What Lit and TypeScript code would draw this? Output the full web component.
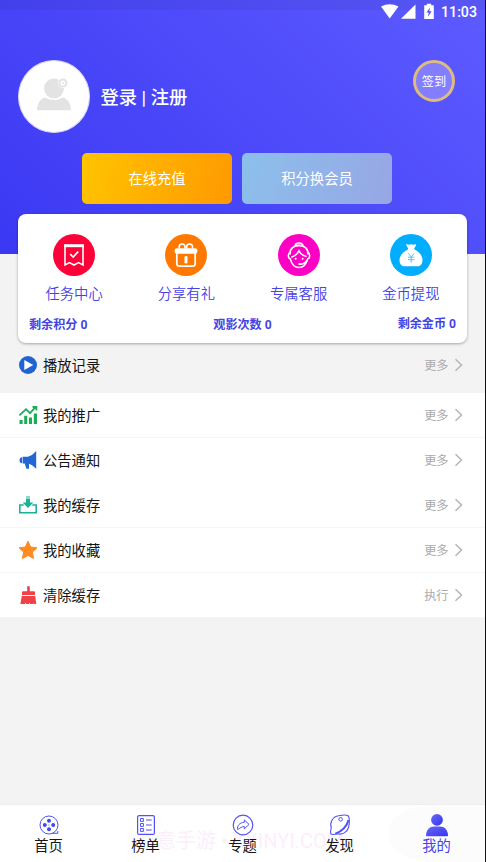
import { LitElement, html, svg, css } from "lit";
import { customElement } from "lit/decorators.js";
import { classMap } from "lit/directives/class-map.js";

const icon = (w: number, h: number, box: string, body: unknown) =>
  html`<svg width=${w} height=${h} viewBox=${box} fill="none">${body}</svg>`;

const shortcuts = [
  {
    label: "任务中心",
    tone: "red",
    art: svg`<path d="M11 11.2H31M12 11V31L16.5 28.6L21 31L25.5 28.6L30 31V11" stroke="#fff" stroke-width="1.6"/><path d="M11.2 10.4H30.8V13.2H11.2Z" fill="#fff"/><path d="M17.2 20.2L20.2 23L25.2 17.6" stroke="#fff" stroke-width="1.6"/>`,
  },
  {
    label: "分享有礼",
    tone: "orange",
    art: svg`<path d="M14.2 14.5V12.8C14.2 9 20 9 20 12.8V14.5M21.7 14.5V12.8C21.7 9 27.5 9 27.5 12.8V14.5" stroke="#fff" stroke-width="1.6"/><rect x="9.7" y="14.3" width="22.6" height="5.4" rx="2" fill="#fff"/><path d="M11.8 19V29.5Q11.8 32.2 14.5 32.2H27.5Q30.2 32.2 30.2 29.5V19" stroke="#fff" stroke-width="1.7"/><rect x="19.5" y="22" width="3" height="7.5" rx="1.3" fill="#fff"/>`,
  },
  {
    label: "专属客服",
    tone: "pink",
    art: svg`<path d="M17 12.3C17 7.8 25 7.8 25 12.3M17.5 11.5H24.5" stroke="#fff" stroke-width="1.4"/><path d="M12 20.5C11 8.2 31 8.2 30 20.5" stroke="#fff" stroke-width="1.7"/><path d="M12.2 18.5C9.7 19.3 9.7 24.4 12.4 25.1C13.7 30.5 17.2 33.5 21 33.5C25.2 33.5 28.2 30.5 29.6 25.1C32.3 24.4 32.3 19.3 29.8 18.5M13.3 23.2C17.2 22.1 19.5 20.3 21 16.8C22.7 20.3 25 21.8 28.5 22.4" stroke="#fff" stroke-width="1.5"/><circle cx="17.6" cy="24.7" r="1" fill="#fff"/><circle cx="24.6" cy="24.7" r="1" fill="#fff"/><path d="M20.5 29.8C24 30.8 27.8 29.2 29.2 26" stroke="#fff" stroke-width="1.8"/>`,
  },
  {
    label: "金币提现",
    tone: "cyan",
    art: svg`<path d="M16.3 11.3Q15.4 10 17 10.3Q19 11.2 21 10.3Q23.5 11.2 25.3 10.3Q26.8 10 25.9 11.7L24.3 14.2V16H18V14.2Z" fill="#fff"/><path d="M17.9 15.4H24.6C29 17.5 32.5 21.8 32.5 26C32.5 29.8 30.5 32.3 28 32.3H14C11.5 32.3 9.5 29.8 9.5 26C9.5 21.8 13.3 17.5 17.9 15.4Z" fill="#fff"/><path d="M18.3 19.3L21.2 23L24.1 19.3M18 23.2H24.4M18 25.7H24.4M21.2 23V28.6" stroke="#56c3f6" stroke-width="1"/>`,
  },
];

const menu = [
  {
    label: "播放记录",
    action: "更多",
    art: svg`<circle cx="10" cy="10" r="9" fill="#2064d2"/><path d="M6.3 5.1V14.9L15.2 10Z" fill="#fff"/>`,
  },
  {
    label: "我的推广",
    action: "更多",
    art: svg`<path d="M1.4 10.4L8 4.2L12 8.2L17.5 2.2M14.6 2H18.4V5.6" stroke="#18ae56" stroke-width="1.8"/><path d="M1.5 15H4.6V19H1.5ZM6.2 10.7H9.2V19H6.2ZM11 12.5H14V19H11ZM15.8 8.6H19V19H15.8Z" fill="#18ae56"/>`,
  },
  {
    label: "公告通知",
    action: "更多",
    art: svg`<path d="M4 7.2C.6 7.2.6 13.2 4 13.2Z" fill="#2366d4"/><path d="M4.6 6.8H10Q14.5 5.3 18.2.9V18.8Q14.3 14.8 11 13.8V18.7H8.4L6.7 13.6H4.6Z" fill="#2366d4"/>`,
  },
  {
    label: "我的缓存",
    action: "更多",
    art: svg`<path d="M5.7 10H1.8V17.8H18.2V10H14.3" stroke="#19b398" stroke-width="1.6"/><path d="M8 1.4H12V2.6H8ZM8 3.5H12V7.6H15.4L10 13L4.6 7.6H8Z" fill="#19b398"/>`,
  },
  {
    label: "我的收藏",
    action: "更多",
    art: svg`<path d="M10 1.2L12.7 7L19 7.8L14.4 12.1L15.6 18.5L10 15.4L4.4 18.5L5.6 12.1L1 7.8L7.3 7Z" fill="#ff8b20" stroke="#ff8b20" stroke-linejoin="round"/>`,
  },
  {
    label: "清除缓存",
    action: "执行",
    art: svg`<path d="M9.2 1.2H11.8V6.2H15.8Q17 6.2 17 7.4V10H4V7.4Q4 6.2 5.2 6.2H9.2ZM3.8 11H17.2L18.3 19H15.5L15 17.6V19H11.9L11.4 17.6L10.9 19H8L7.5 17.6L7 19H2.4Z" fill="#ef4146"/>`,
  },
];

const tabs = [
  {
    label: "首页",
    art: svg`<circle cx="11" cy="11" r="9" stroke="#5153f4" stroke-width="1"/><path d="M14 19.3H19.8V17" stroke="#5153f4"/><g fill="#4547f2"><circle cx="11" cy="6.8" r="2"/><circle cx="6.8" cy="11" r="2"/><circle cx="15.2" cy="11" r="2"/><circle cx="11" cy="15.2" r="2"/><circle cx="11" cy="11" r=".6"/></g>`,
  },
  {
    label: "榜单",
    art: svg`<g stroke="#5153f4"><rect x="2.6" y="1.6" width="16.8" height="18.8" rx="1.5" stroke-width="1.2"/><path d="M5.5 4.5H8.4V7.4H5.5ZM5.5 9.5H8.4V12.4H5.5ZM5.5 14.5H8.4V17.4H5.5ZM11 6H16.7M11 11H16.7M11 16H16.7"/></g>`,
  },
  {
    label: "专题",
    art: svg`<g stroke="#5153f4"><circle cx="11" cy="11" r="9.8" stroke-width="1.2"/><path d="M12.3 5.9L17.1 10.4L12.3 14.9V12.5C9.5 12.5 8.2 14.2 5.6 15.5C4.9 12 7.7 8.3 12.3 8.3Z" stroke-linejoin="round"/></g>`,
  },
  {
    label: "发现",
    art: svg`<g stroke="#5153f4"><path d="M18.8 1.5C20.8 3.5 20.5 9 19.7 13C18.4 18.4 13 21 8.3 19.8C5.3 20.5 2.8 20.8 2 19.8C1.2 18.8 1.6 16.4 2.3 13.7C.4 8.5 4 2.2 9.5 1.7C13 1 17.2.5 18.8 1.5Z" stroke-width="1.1"/><path d="M19.6 6C17.8 12.3 13 17.2 6.4 19.7" stroke-width="2.1"/><circle cx="11.6" cy="5.3" r="1.8"/></g>`,
  },
  {
    label: "我的",
    active: true,
    art: svg`<defs><linearGradient id="me" x1="0" y1="0" x2="1" y2="1"><stop stop-color="#6568fa"/><stop offset="1" stop-color="#3a35ec"/></linearGradient></defs><circle cx="11" cy="5.8" r="5.9" fill="url(#me)"/><path d="M0 21.6C0 15.6 4 12.4 8 12.4H14C18 12.4 22 15.6 22 21.6Q22 22.3 21 22.3H1Q0 22.3 0 21.6Z" fill="url(#me)"/>`,
  },
];

@customElement("app-root")
export class AppRoot extends LitElement {
  static styles = css`
    :host, * { box-sizing: border-box; }
    :host {
      display: flex;
      flex-direction: column;
      width: 486px;
      height: 862px;
      overflow: hidden;
      border-right: 1px solid #111;
      background: #f3f3f3;
      font-family: Roboto, "Noto Sans CJK SC", sans-serif;
      color: #151515;
      white-space: nowrap;
    }
    svg { display: block; flex: none; overflow: visible; }
    .hero {
      flex: none;
      height: 254px;
      background: linear-gradient(45deg, #3b38f4, #5d5bff);
      color: #fff;
    }
    .status {
      height: 24px;
      padding: 0 8px 0 0;
      display: flex;
      justify-content: flex-end;
      background: linear-gradient(rgba(0, 0, 50, 0.06) 10px, transparent 10px);
    }
    .status svg { margin-right: 1px; }
    .clock { font-size: 14.2px; line-height: 25px; font-weight: 500; }
    .profile { display: flex; height: 129px; padding: 36px 30px 0 18px; }
    .avatar {
      width: 72px;
      height: 73px;
      border-radius: 50%;
      background: #fff;
      border: 1px solid #d5d5f3;
      display: flex;
      justify-content: center;
      padding: 17px 1px 0 0;
    }
    .login { margin: 23px auto 0 10.5px; font-size: 18.3px; line-height: 29px; font-weight: 500; }
    .sign {
      width: 42px;
      height: 42px;
      border: 3px solid #dfbb7e;
      border-radius: 50%;
      background: #837dff;
      font-size: 12.2px;
      line-height: 38px;
      text-align: center;
    }
    .buttons { display: flex; gap: 10px; padding-left: 82px; }
    .button {
      width: 150px;
      height: 51px;
      border-radius: 5px;
      font-size: 14.3px;
      line-height: 52px;
      text-align: center;
    }
    .gold { background: linear-gradient(105deg, #ffc400, #ff9900); }
    .sky { background: linear-gradient(105deg, #8cc0eb, #97a6e5); }
    .card {
      flex: none;
      height: 129px;
      margin: -40px 18px 0;
      border-radius: 8px;
      background: #fff;
      box-shadow: 0 1px 3px rgba(0, 0, 0, 0.32);
      color: #4443e4;
      position: relative;
    }
    .shortcuts { display: grid; grid-template-columns: repeat(4, 1fr); padding-top: 20px; }
    .shortcut { display: flex; flex-direction: column; align-items: center; }
    .disc { width: 42px; height: 42px; border-radius: 50%; }
    .red { background: #fd0139; }
    .orange { background: #ff7900; }
    .pink { background: #fd00c5; }
    .cyan { background: #00adff; }
    .caption { font-size: 14.3px; line-height: 20px; margin-top: 8px; font-weight: 350; }
    .totals {
      display: grid;
      grid-template-columns: 1fr 1fr 1fr;
      padding: 11px 11px 0;
      font-size: 12.1px;
      line-height: 20px;
      font-weight: 700;
    }
    .middle { text-align: center; }
    .end { text-align: right; margin-top: -1px; }
    .row {
      flex: none;
      height: 45px;
      display: flex;
      align-items: center;
      padding: 0 22px 0 18px;
      background: #fff;
      border-bottom: 1px solid #f5f5f5;
    }
    .history { height: 50px; padding-bottom: 6px; background: none; border: 0; }
    .plain { border-color: #fff; }
    .name { flex: 1; margin-left: 5px; padding-top: 1px; font-size: 14.3px; line-height: 20px; }
    .more { font-size: 12.2px; color: #aaa; margin-right: 5.5px; }
    .tabs {
      flex: none;
      position: relative;
      display: grid;
      grid-template-columns: repeat(5, 97px);
      height: 58px;
      margin-top: auto;
      border-top: 1px solid #eee;
      background: #fff;
      overflow: hidden;
    }
    .tab {
      position: relative;
      display: flex;
      flex-direction: column;
      align-items: center;
      padding-top: 9px;
      font-size: 14.3px;
    }
    .glyph { height: 22px; }
    .tab-name { line-height: 20px; }
    .active { background: #fcfcfc; color: #4443ec; border-radius: 45px 0 0 45px / 28px 0 0 28px; }
    .mark { position: absolute; left: 136px; top: 22px; font-size: 20px; line-height: 28px; color: #fdeefb; }
  `;

  private row(item: (typeof menu)[number], i: number) {
    return html`<div class=${classMap({ row: true, history: i === 0, plain: i === 2 })}>
      ${icon(20, 20, "0 0 20 20", item.art)}
      <span class="name">${item.label}</span>
      <span class="more">${item.action}</span>
      ${icon(9, 14, "0 0 9 14", svg`<path d="M1.5 1.2L7.5 7L1.5 12.8" stroke="#b5b5b5" stroke-width="1.5"/>`)}
    </div>`;
  }

  render() {
    return html`
      <header class="hero">
        <div class="status">
          ${icon(73, 24, "0 0 73 24", svg`<g fill="#fff"><path d="M14 6.5Q22.8 1.8 31.5 6.5L22.7 18.5Z"/><path d="M48.5 4.5V18.8H34Z"/><path d="M57.2 5.3H59.8V3.8H64.2V5.3H66.8V18.9H57.2Z"/></g><path d="M63 7.5L59.5 12.5H61.7L61 16.8L64.6 11.3H62.3Z" fill="#514ff9"/>`)}
          <span class="clock">11:03</span>
        </div>
        <div class="profile">
          <div class="avatar">
            ${icon(36, 33, "0 0 36 33", svg`<g fill="#e3e3e3"><circle cx="18" cy="10.5" r="10"/><path d="M1 32.3C1 25 5 20.5 9 19.5C14 22.8 22 22.8 27 19.5C31 20.5 35 25 35 32.3Z"/><circle cx="27" cy="5" r="5" fill="#fff"/></g><circle cx="27" cy="5" r="3.5" stroke="#e3e3e3" stroke-width="2"/><circle cx="27" cy="5" r="1" fill="#e3e3e3"/>`)}
          </div>
          <div class="login">登录 | 注册</div>
          <div class="sign">签到</div>
        </div>
        <div class="buttons">
          <div class="button gold">在线充值</div>
          <div class="button sky">积分换会员</div>
        </div>
      </header>
      <section class="card">
        <div class="shortcuts">
          ${shortcuts.map(
            (s) => html`<div class="shortcut">
              <div class="disc ${s.tone}">${icon(42, 42, "0 0 42 42", s.art)}</div>
              <span class="caption">${s.label}</span>
            </div>`
          )}
        </div>
        <div class="totals">
          <span>剩余积分 0</span><span class="middle">观影次数 0</span><span class="end">剩余金币 0</span>
        </div>
      </section>
      ${menu.map((item, i) => this.row(item, i))}
      <nav class="tabs">
        <span class="mark">心意手游 • KXINYI.COM</span>
        ${tabs.map(
          (t) => html`<div class=${classMap({ tab: true, active: !!t.active })}>
            <div class="glyph">${icon(22, 22, "0 0 22 22", t.art)}</div>
            <span class="tab-name">${t.label}</span>
          </div>`
        )}
      </nav>
    `;
  }
}
